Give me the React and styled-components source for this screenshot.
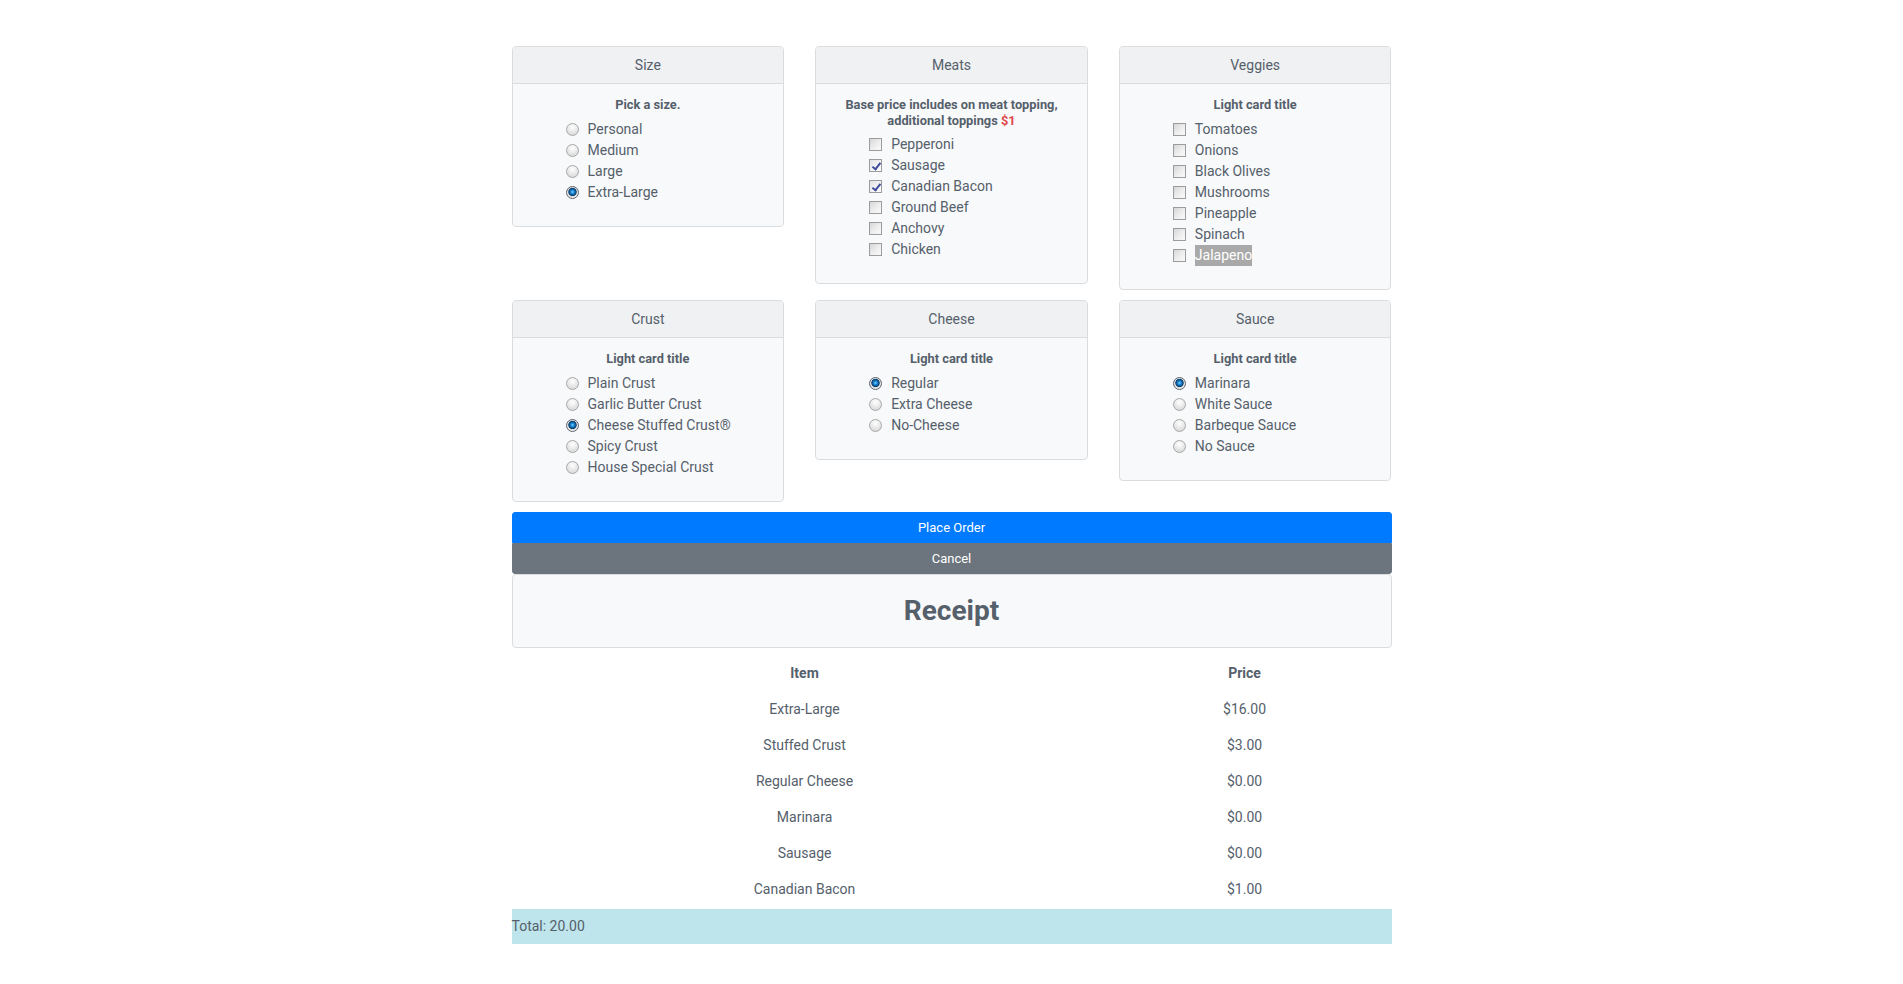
import React from 'react';
import styled, { createGlobalStyle } from 'styled-components';

const GlobalStyle = createGlobalStyle`
  html, body { margin: 0; padding: 0; background: #fff; }
  body {
    font-family: Roboto, "Helvetica Neue", Arial, sans-serif;
    font-size: 14px;
    line-height: 1.5;
    color: #55606b;
  }
  * { box-sizing: border-box; }
`;

const Page = styled.div`
  width: 880px;
  margin: 0 auto;
  padding: 46px 0 40px;
`;

const Grid = styled.div`
  display: grid;
  grid-template-columns: repeat(3, 1fr);
  column-gap: 31px;
  row-gap: 10.5px;
  align-items: start;
`;

const Card = styled.section`
  background: #f8f9fa;
  border: 1px solid #dadde0;
  border-radius: 4px;
  overflow: hidden;
`;

const CardHeader = styled.div`
  background: #f0f1f3;
  border-bottom: 1px solid #dadde0;
  padding: 7.5px 12px;
  line-height: 21px;
  font-size: 14px;
  text-align: center;
`;

const CardBody = styled.div`
  padding: 13px 12px 12px;
`;

const CardTitle = styled.h6`
  margin: 0 0 6px;
  font-size: 12.8px;
  font-weight: 700;
  line-height: 15.5px;
  text-align: center;
`;

const Price = styled.span`
  color: #e0484a;
`;

const Options = styled.ul`
  list-style: none;
  margin: 0 0 11px;
  padding: 0 0 0 41px;
`;

const OptionLabel = styled.label`
  display: flex;
  align-items: center;
  gap: 9px;
  line-height: 21px;
  font-size: 14px;
`;

const Radio = styled.input.attrs({ type: 'radio' })`
  appearance: none;
  -webkit-appearance: none;
  margin: 0;
  width: 13px;
  height: 13px;
  flex: none;
  border-radius: 50%;
  border: 1px solid #a8a8a8;
  background: radial-gradient(circle at 50% 30%, #ffffff 0, #e4e4e4 60%, #cfcfcf 100%);
  &:checked {
    border-color: #5b6470;
    background: radial-gradient(circle at 50% 45%, #8fd6ff 0, #1f8fdc 1.5px, #0b5a9a 3px, #083a66 3.8px, #d8d8d8 4.5px, #f4f4f4 6px);
  }
`;

const Check = styled.input.attrs({ type: 'checkbox' })`
  appearance: none;
  -webkit-appearance: none;
  margin: 0;
  width: 13px;
  height: 13px;
  flex: none;
  position: relative;
  border: 1px solid #9c9c9c;
  background: linear-gradient(135deg, #d6d6d6 0%, #eeeeee 55%, #fafafa 100%);
  &:checked {
    background: linear-gradient(135deg, #e2e2e2 0%, #f4f4f4 60%, #fcfcfc 100%);
  }
  &:checked::after {
    content: '';
    position: absolute;
    left: 3.5px;
    top: 0.5px;
    width: 3px;
    height: 7px;
    border: solid #3e4c9c;
    border-width: 0 2px 2px 0;
    transform: rotate(38deg);
  }
`;

const Selected = styled.span`
  background: #a9a9a9;
  color: #fff;
`;

const ButtonGroup = styled.div`
  display: flex;
  flex-direction: column;
  margin-top: 10.5px;
`;

const Button = styled.button`
  width: 100%;
  padding: 4px 8px;
  border: 1px solid ${p => (p.$variant === 'primary' ? '#007bff' : '#6c757d')};
  background: ${p => (p.$variant === 'primary' ? '#007bff' : '#6c757d')};
  color: #fff;
  font-family: Roboto, Arial, sans-serif;
  font-size: 13px;
  line-height: 21px;
  cursor: pointer;
  border-radius: 0;
  &:first-child { border-radius: 3px 3px 0 0; }
  &:last-child { border-radius: 0 0 3px 3px; }
`;

const ReceiptCard = styled.div`
  background: #f8f9fa;
  border: 1px solid #dadde0;
  border-radius: 4px;
  padding: 19px 20px;
  text-align: center;
`;

const ReceiptTitle = styled.h3`
  margin: 0;
  font-size: 28px;
  font-weight: 700;
  line-height: 1.2;
  color: #55606b;
`;

const Table = styled.table`
  width: 100%;
  margin-top: 8px;
  border-collapse: collapse;
  font-size: 14px;
`;

const Th = styled.th`
  width: ${p => p.$w};
  padding: 7.5px 12px;
  line-height: 21px;
  font-weight: 700;
  text-align: center;
`;

const Td = styled.td`
  padding: 7.5px 12px;
  line-height: 21px;
  text-align: center;
`;

const TotalCell = styled.td`
  border-top: 1.5px solid #fff;
  background: #bee5eb;
  padding: 7px 0;
  line-height: 21px;
  text-align: left;
`;

const sections = [
  {
    title: 'Size', sub: 'Pick a size.', type: 'radio', name: 'size',
    items: ['Personal', 'Medium', 'Large', 'Extra-Large'], checked: ['Extra-Large'],
  },
  {
    title: 'Meats',
    sub: <>Base price includes on meat topping, additional toppings <Price>$1</Price></>,
    type: 'check', name: 'meats',
    items: ['Pepperoni', 'Sausage', 'Canadian Bacon', 'Ground Beef', 'Anchovy', 'Chicken'],
    checked: ['Sausage', 'Canadian Bacon'],
  },
  {
    title: 'Veggies', sub: 'Light card title', type: 'check', name: 'veggies',
    items: ['Tomatoes', 'Onions', 'Black Olives', 'Mushrooms', 'Pineapple', 'Spinach', 'Jalapeno'],
    checked: [], selected: 'Jalapeno',
  },
  {
    title: 'Crust', sub: 'Light card title', type: 'radio', name: 'crust',
    items: ['Plain Crust', 'Garlic Butter Crust', 'Cheese Stuffed Crust®', 'Spicy Crust', 'House Special Crust'],
    checked: ['Cheese Stuffed Crust®'],
  },
  {
    title: 'Cheese', sub: 'Light card title', type: 'radio', name: 'cheese',
    items: ['Regular', 'Extra Cheese', 'No-Cheese'], checked: ['Regular'],
  },
  {
    title: 'Sauce', sub: 'Light card title', type: 'radio', name: 'sauce',
    items: ['Marinara', 'White Sauce', 'Barbeque Sauce', 'No Sauce'], checked: ['Marinara'],
  },
];

const receipt = [
  ['Extra-Large', '$16.00'],
  ['Stuffed Crust', '$3.00'],
  ['Regular Cheese', '$0.00'],
  ['Marinara', '$0.00'],
  ['Sausage', '$0.00'],
  ['Canadian Bacon', '$1.00'],
];

function OptionCard({ s }) {
  const Input = s.type === 'radio' ? Radio : Check;
  return (
    <Card>
      <CardHeader>{s.title}</CardHeader>
      <CardBody>
        <CardTitle>{s.sub}</CardTitle>
        <Options>
          {s.items.map(it => (
            <li key={it}>
              <OptionLabel>
                <Input name={s.name} defaultChecked={s.checked.includes(it)} />
                {s.selected === it ? <Selected>{it}</Selected> : <span>{it}</span>}
              </OptionLabel>
            </li>
          ))}
        </Options>
      </CardBody>
    </Card>
  );
}

export default function App() {
  return (
    <>
      <GlobalStyle />
      <Page>
        <Grid>
          {sections.map(s => <OptionCard key={s.title} s={s} />)}
        </Grid>
        <ButtonGroup>
          <Button $variant="primary">Place Order</Button>
          <Button $variant="secondary">Cancel</Button>
        </ButtonGroup>
        <ReceiptCard>
          <ReceiptTitle>Receipt</ReceiptTitle>
        </ReceiptCard>
        <Table>
          <thead>
            <tr>
              <Th $w="66.6%">Item</Th>
              <Th $w="33.4%">Price</Th>
            </tr>
          </thead>
          <tbody>
            {receipt.map(([item, price]) => (
              <tr key={item}>
                <Td>{item}</Td>
                <Td>{price}</Td>
              </tr>
            ))}
          </tbody>
          <tfoot>
            <tr>
              <TotalCell colSpan={2}>Total: 20.00</TotalCell>
            </tr>
          </tfoot>
        </Table>
      </Page>
    </>
  );
}
